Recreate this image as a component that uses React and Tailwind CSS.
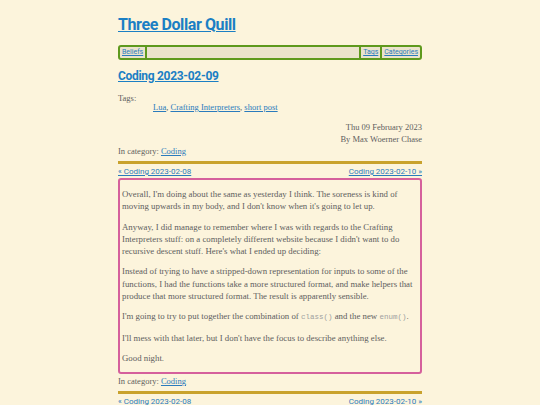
import React from 'react';

const serif = { fontFamily: '"Liberation Serif", "DejaVu Serif", serif' };
const sans = { fontFamily: 'Roboto, "Noto Sans", sans-serif' };
const mono = { fontFamily: '"Liberation Mono", "DejaVu Sans Mono", monospace' };

const linkCls = 'text-[#2a7bbd] underline';

const Rule = () => <div className="h-[3px] bg-[#c9a22c] mt-[4px]" />;

const PostNav = () => (
  <div className="flex justify-between mt-[2px] text-[8px] leading-[11px]" style={sans}>
    <a href="#" className={linkCls}>« Coding 2023-02-08</a>
    <a href="#" className={linkCls}>Coding 2023-02-10 »</a>
  </div>
);

const Code = ({ children }) => (
  <code className="text-[7.5px] text-[#a0a0a0]" style={mono}>{children}</code>
);

export default function App() {
  return (
    <div className="min-h-screen bg-[#fcf4dc] text-[#5e5e5e]" style={serif}>
      <div className="w-[304px] mx-auto pt-[14px]">
        <h1 className="text-[16px] leading-[22px] font-bold tracking-tight" style={sans}>
          <a href="#" className="text-[#1b7fc4] underline">Three Dollar Quill</a>
        </h1>

        <nav
          className="mt-[9px] flex h-[15px] items-center border-2 border-[#5e991d] rounded-[3px] bg-[#ebe3cc] text-[7px]"
          style={sans}
        >
          <a href="#" className={`${linkCls} px-[2px] border-r-2 border-[#5e991d] leading-[11px]`}>Beliefs</a>
          <div className="flex-1" />
          <a href="#" className={`${linkCls} px-[2px] border-l-2 border-[#5e991d] leading-[11px]`}>Tags</a>
          <a href="#" className={`${linkCls} px-[2px] border-l-2 border-[#5e991d] leading-[11px]`}>Categories</a>
        </nav>

        <h2 className="mt-[8px] text-[12px] leading-[16px] font-bold tracking-tight" style={sans}>
          <a href="#" className="text-[#1b7fc4] underline">Coding 2023-02-09</a>
        </h2>

        <div className="mt-[10px] text-[8.5px] leading-[9px]">Tags:</div>
        <div className="pl-[35px] text-[8.5px] leading-[9px]">
          <a href="#" className={linkCls}>Lua</a>, <a href="#" className={linkCls}>Crafting Interpreters</a>,{' '}
          <a href="#" className={linkCls}>short post</a>
        </div>

        <div className="mt-[9px] text-right text-[8.5px] leading-[12px]">
          <div>Thu 09 February 2023</div>
          <div>By Max Woerner Chase</div>
        </div>
        <div className="text-[8.5px] leading-[12px]">
          In category: <a href="#" className={linkCls}>Coding</a>
        </div>

        <Rule />
        <PostNav />

        <div className="mt-[1px] border-2 border-[#d5609c] rounded-[3px] px-[2px] py-[8px] text-[8.8px] leading-[12.3px] flex flex-col gap-[8px]">
          <p>
            Overall, I'm doing about the same as yesterday I think. The soreness is kind of moving upwards in my
            body, and I don't know when it's going to let up.
          </p>
          <p>
            Anyway, I did manage to remember where I was with regards to the Crafting Interpreters stuff: on a
            completely different website because I didn't want to do recursive descent stuff. Here's what I ended up
            deciding:
          </p>
          <p>
            Instead of trying to have a stripped-down representation for inputs to some of the functions, I had the
            functions take a more structured format, and make helpers that produce that more structured format. The
            result is apparently sensible.
          </p>
          <p>
            I'm going to try to put together the combination of <Code>class()</Code> and the new <Code>enum()</Code>.
          </p>
          <p>I'll mess with that later, but I don't have the focus to describe anything else.</p>
          <p>Good night.</p>
        </div>

        <div className="mt-[1px] text-[8.5px] leading-[12px]">
          In category: <a href="#" className={linkCls}>Coding</a>
        </div>
        <Rule />
        <PostNav />
      </div>
    </div>
  );
}
